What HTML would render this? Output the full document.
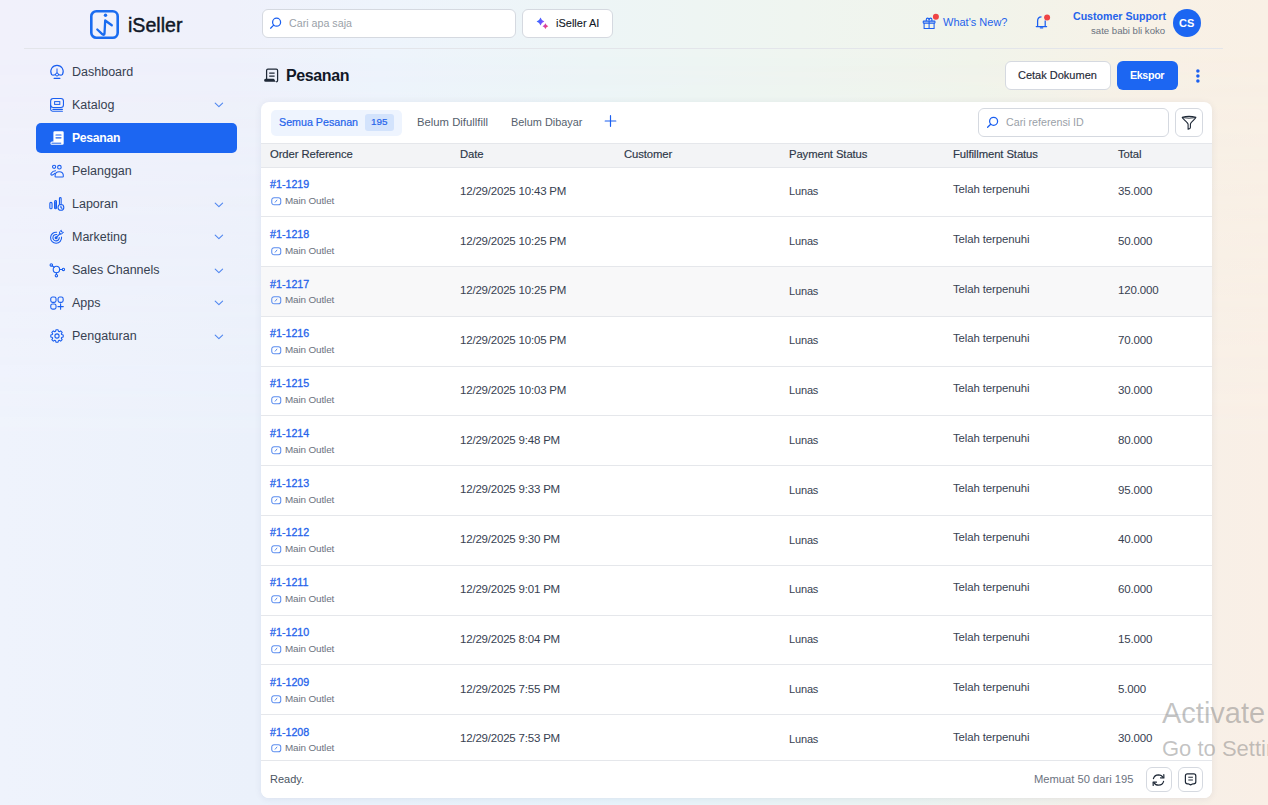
<!DOCTYPE html>
<html><head><meta charset="utf-8"><style>
*{box-sizing:border-box;margin:0;padding:0}
html,body{width:1268px;height:805px;overflow:hidden}
body{font-family:"Liberation Sans",sans-serif;position:relative;
 background:linear-gradient(90deg,#f1f1fb 0%,#eff1fb 18%,#eef4fc 30%,#edf5f6 47%,#eff5f0 63%,#f1f4eb 77%,#f8f1e6 92%,#f9f0e5 100%);color:#1f2937}
.abs{position:absolute}
svg.abs{overflow:visible}
.t{position:absolute;white-space:nowrap;line-height:1}
.box{position:absolute;background:#fff;border:1px solid #d5d9e0;border-radius:6px}
.nav{font-size:12.5px;color:#374151}
.card{left:261px;top:102px;width:951px;height:696px;background:#fff;border-radius:8px;box-shadow:0 1px 7px rgba(30,40,90,.08);overflow:hidden}
.th{position:absolute;left:0;top:41px;width:951px;height:25px;background:#f3f4f6;border-top:1px solid #e5e7eb;border-bottom:1px solid #e5e7eb}
.th .t{font-size:11.3px;letter-spacing:-0.1px;color:#2d3748;top:5px;-webkit-text-stroke:0.15px #2d3748}
.row{position:absolute;left:0;width:951px;height:50px;border-bottom:1px solid #e5e7eb}
.row .ref{font-size:10.7px;color:#2563eb;left:9px;top:11.7px;-webkit-text-stroke:0.3px #2563eb}
.row .mo{font-size:9.9px;letter-spacing:-0.12px;color:#6b7280;left:24px;top:28.5px}
.row .d{font-size:11.5px;letter-spacing:-0.2px;color:#374151;left:199px;top:18.4px}
.row .p{font-size:11px;letter-spacing:-0.15px;color:#374151;left:528px;top:18.8px}
.row .f{font-size:11.4px;letter-spacing:-0.1px;color:#374151;left:692px;top:16.7px}
.row .tot{font-size:11.5px;letter-spacing:-0.15px;color:#374151;left:857px;top:18.5px}
</style></head><body>
<div class="abs" style="left:0;top:0;width:1268px;height:805px;background:linear-gradient(90deg,#eff3fc 0%,#ebf1fb 20%,#e8f4fb 50%,#ecf4f2 72%,#f6f0e8 90%,#f9efe6 100%);-webkit-mask-image:linear-gradient(180deg,transparent 6%,#000 55%)"></div>
<div class="abs" style="left:24px;top:48px;width:1199px;height:1px;background:#e3e5ea"></div>
<svg class="abs" style="left:89px;top:9px;" width="31" height="31" viewBox="0 0 31 31" fill="none"><rect x="2.3" y="2.3" width="26.4" height="26.4" rx="5" stroke="#1a6cf0" stroke-width="2.6"/><circle cx="16.5" cy="6.2" r="1.7" fill="#1a6cf0"/><path d="M8.3,20.5 L13.5,25.3 Q15.2,26.6 15.5,24.5 L16.2,11.5 L22.8,16.3" stroke="#1a6cf0" stroke-width="2.3" stroke-linecap="round" stroke-linejoin="round"/></svg>
<div class="t" style="left:128px;top:16px;font-size:19.6px;color:#111827;-webkit-text-stroke:0.45px #111827">iSeller</div>
<div class="box" style="left:262px;top:9px;width:254px;height:29px"></div>
<svg class="abs" style="left:268px;top:16px;" width="14" height="14" viewBox="0 0 14 14" fill="none"><circle cx="8.6" cy="6.2" r="4" stroke="#1a5ff0" stroke-width="1.25"/><path d="M5.7,9.1 L2.6,12.2" stroke="#1a5ff0" stroke-width="1.25" stroke-linecap="round"/></svg>
<div class="t" style="left:289px;top:18px;font-size:10.7px;color:#9a9fa8">Cari apa saja</div>
<div class="box" style="left:522px;top:9px;width:91px;height:29px"></div>
<svg class="abs" style="left:534px;top:15px;" width="14" height="14" viewBox="0 0 14 14" fill="none"><defs><linearGradient id="sg1" x1="0" y1="0.3" x2="1" y2="0.7"><stop offset="0" stop-color="#1f6bff"/><stop offset="1" stop-color="#9a4dff"/></linearGradient><linearGradient id="sg2" x1="0" y1="0.3" x2="1" y2="0.7"><stop offset="0" stop-color="#b548e0"/><stop offset="1" stop-color="#ff3d55"/></linearGradient></defs><path d="M6.5,2.6 Q7.4,5.6 10.4,6.5 Q7.4,7.4 6.5,10.4 Q5.6,7.4 2.6,6.5 Q5.6,5.6 6.5,2.6Z" fill="url(#sg1)"/><path d="M11.4,8.3 Q12.1,10.5 14.3,11.2 Q12.1,11.9 11.4,14.1 Q10.7,11.9 8.5,11.2 Q10.7,10.5 11.4,8.3Z" fill="url(#sg2)"/></svg>
<div class="t" style="left:556px;top:18px;font-size:11px;color:#111827;-webkit-text-stroke:0.1px #111827">iSeller AI</div>
<svg class="abs" style="left:922px;top:15px;" width="16" height="16" viewBox="0 0 16 16" fill="none"><rect x="1.2" y="6.1" width="11.8" height="2" rx=".6" stroke="#1a5ff0" stroke-width="1.05"/><path d="M2.1,8.1 V13.4 H12.1 V8.1 M7.1,6.1 V13.4" stroke="#1a5ff0" stroke-width="1.05"/><path d="M4.3,6 V4.6 Q4.3,3.1 5.6,3.1 Q7,3.1 7.1,5.5 Q7.2,3.1 8.6,3.1 Q9.9,3.1 9.9,4.6 V6" stroke="#1a5ff0" stroke-width="1.1"/><circle cx="13.9" cy="1.8" r="3" fill="#ef4444"/></svg>
<div class="t" style="left:943px;top:17px;font-size:11px;color:#2563eb">What's New?</div>
<svg class="abs" style="left:1035px;top:15px;" width="14" height="14" viewBox="0 0 14 14" fill="none"><path d="M2.6,11.5 V6 Q2.6,2 6.5,1.9 M10.2,5.5 V11.5" stroke="#1a5ff0" stroke-width="1.25"/><path d="M1.3,11.6 H11.6" stroke="#1a5ff0" stroke-width="1.3" stroke-linecap="round"/><path d="M5.3,12.8 H7.8" stroke="#1a5ff0" stroke-width="1.2" stroke-linecap="round"/><circle cx="12.1" cy="2.6" r="3" fill="#ef4444"/></svg>
<div class="t" style="left:1073px;top:11px;font-size:10.6px;font-weight:700;color:#2563eb">Customer Support</div>
<div class="t" style="left:1091px;top:26px;font-size:9.6px;color:#6b7280">sate babi bli koko</div>
<div class="abs" style="left:1173px;top:9px;width:28px;height:28px;border-radius:50%;background:#1c66f2"></div>
<div class="t" style="left:1179px;top:18px;font-size:11px;font-weight:700;color:#fff">CS</div>
<div class="abs" style="left:36px;top:123px;width:201px;height:30px;background:#1c66f2;border-radius:5px"></div>
<svg class="abs" style="left:50px;top:65px;" width="14" height="14" viewBox="0 0 14 14" fill="none"><path d="M1.5,9.4 A6.2,6.2 0 1 1 12.5,9.4" stroke="#1a5ff0" stroke-width="1.1" stroke-linecap="round" stroke-linejoin="round"/><path d="M7,3.9 V8" stroke="#1a5ff0" stroke-width="1" stroke-linecap="round"/><path d="M1.5,9.4 Q2.4,10.4 4,10 L5.6,9.6 M12.5,9.4 Q11.6,10.4 10,10 L8.4,9.6" stroke="#1a5ff0" stroke-width="1.1" stroke-linecap="round" stroke-linejoin="round"/><circle cx="7" cy="9.5" r="1.5" stroke="#1a5ff0" stroke-width="1"/><path d="M4.1,13.4 H9.9" stroke="#1a5ff0" stroke-width="1.1" stroke-linecap="round" stroke-linejoin="round"/></svg>
<div class="t nav" style="left:72px;top:66.0px">Dashboard</div>
<svg class="abs" style="left:50px;top:98px;" width="14" height="14" viewBox="0 0 14 14" fill="none"><rect x="0.65" y="0.55" width="12.8" height="8.9" rx="2.5" stroke="#1a5ff0" stroke-width="1.1" stroke-linecap="round" stroke-linejoin="round"/><rect x="4.6" y="3.6" width="5.2" height="2.8" stroke="#1a5ff0" stroke-width="1"/><path d="M0.65,7 V11.3 Q0.65,13.2 2.6,13.2 H12.4 M2.9,11.4 H12.4" stroke="#1a5ff0" stroke-width="1.1" stroke-linecap="round" stroke-linejoin="round"/></svg>
<div class="t nav" style="left:72px;top:99.0px">Katalog</div>
<svg class="abs" style="left:214px;top:102px;" width="10" height="6" viewBox="0 0 10 6" fill="none"><path d="M1.2,1.2 L4.9,4.6 L8.6,1.2" stroke="#4f86f0" stroke-width="1.1" stroke-linecap="round" stroke-linejoin="round"/></svg>
<svg class="abs" style="left:50px;top:131px;" width="14" height="14" viewBox="0 0 14 14" fill="none"><path d="M3.4,10.2 V1.6 Q3.4,0.3 4.7,0.3 H12.4 Q13.7,0.3 13.7,1.6 V12.4 Q13.7,13.8 12.3,13.8 H2 Q0.4,13.8 0.4,12.2 Q0.4,10.6 2,10.6 H3.4Z" fill="#fff"/><path d="M6,4 H11 M6,6.8 H11" stroke="#1d63ed" stroke-width="1.2" stroke-linecap="round"/><path d="M1.9,12.2 H10.8" stroke="#1d63ed" stroke-width="1" stroke-linecap="round"/></svg>
<div class="t nav" style="left:72px;top:132.3px;color:#fff;font-weight:700;font-size:12.2px;letter-spacing:-0.3px">Pesanan</div>
<svg class="abs" style="left:50px;top:164px;" width="14" height="14" viewBox="0 0 14 14" fill="none"><circle cx="4.1" cy="2.8" r="1.6" stroke="#1a5ff0" stroke-width="1.1" stroke-linecap="round" stroke-linejoin="round"/><circle cx="9.4" cy="3.2" r="1.8" stroke="#1a5ff0" stroke-width="1.1" stroke-linecap="round" stroke-linejoin="round"/><path d="M5.05,12.2 Q4.9,7.75 9.2,7.75 Q13.5,7.75 13.35,12.2 Q13.3,12.95 12.6,12.95 H5.8 Q5.05,12.95 5.05,12.2Z" stroke="#1a5ff0" stroke-width="1.1" stroke-linecap="round" stroke-linejoin="round"/><path d="M5.5,6.75 Q2.8,6.8 1.2,9.2 Q0.4,10.7 1.6,11.1 Q2.6,11.3 4.8,9.4" stroke="#1a5ff0" stroke-width="1.1" stroke-linecap="round" stroke-linejoin="round"/></svg>
<div class="t nav" style="left:72px;top:165.0px">Pelanggan</div>
<svg class="abs" style="left:50px;top:197px;" width="14" height="14" viewBox="0 0 14 14" fill="none"><rect x="-0.15" y="5.35" width="2.2" height="6.4" rx="1.1" stroke="#1a5ff0" stroke-width="1.1" stroke-linecap="round" stroke-linejoin="round"/><rect x="4.75" y="3.45" width="1.7" height="8.3" rx="0.85" stroke="#1a5ff0" stroke-width="1.1" stroke-linecap="round" stroke-linejoin="round"/><path d="M4.9,4.5 V11.5" stroke="#1a5ff0" stroke-width="1.6"/><path d="M9.45,7.2 V1.5 Q9.45,0.65 10.3,0.65 Q11.15,0.65 11.15,1.5 V6.6" stroke="#1a5ff0" stroke-width="1.1" stroke-linecap="round" stroke-linejoin="round"/><circle cx="10.9" cy="10.4" r="2.9" stroke="#1a5ff0" stroke-width="1.1" stroke-linecap="round" stroke-linejoin="round"/><path d="M10.9,9 V10.5 L11.9,11.3" stroke="#1a5ff0" stroke-width="1.1" stroke-linecap="round" stroke-linejoin="round"/></svg>
<div class="t nav" style="left:72px;top:198.0px">Laporan</div>
<svg class="abs" style="left:214px;top:202px;" width="10" height="6" viewBox="0 0 10 6" fill="none"><path d="M1.2,1.2 L4.9,4.6 L8.6,1.2" stroke="#4f86f0" stroke-width="1.1" stroke-linecap="round" stroke-linejoin="round"/></svg>
<svg class="abs" style="left:50px;top:230px;" width="14" height="14" viewBox="0 0 14 14" fill="none"><path d="M11.55,7.1 A5.5,5.5 0 1 1 6.7,2.23" stroke="#1a5ff0" stroke-width="1.1" stroke-linecap="round" stroke-linejoin="round"/><path d="M9.3,7.6 A3.2,3.2 0 1 1 6.8,4.58" stroke="#1a5ff0" stroke-width="1.1" stroke-linecap="round" stroke-linejoin="round"/><circle cx="6.1" cy="7.7" r="1.5" fill="#1a5ff0"/><path d="M6.1,7.7 L10.3,3.5" stroke="#1a5ff0" stroke-width="1.1" stroke-linecap="round" stroke-linejoin="round"/><path d="M9.3,3.3 L9.9,1.4 L11.3,0.3 L11.6,2 L13.4,2.3 L12.3,3.6 L10.4,4.3Z" stroke="#1a5ff0" stroke-width="1" stroke-linejoin="round" fill="none"/></svg>
<div class="t nav" style="left:72px;top:231.0px">Marketing</div>
<svg class="abs" style="left:214px;top:234px;" width="10" height="6" viewBox="0 0 10 6" fill="none"><path d="M1.2,1.2 L4.9,4.6 L8.6,1.2" stroke="#4f86f0" stroke-width="1.1" stroke-linecap="round" stroke-linejoin="round"/></svg>
<svg class="abs" style="left:50px;top:263px;" width="14" height="14" viewBox="0 0 14 14" fill="none"><circle cx="6.4" cy="6.5" r="3.2" stroke="#1a5ff0" stroke-width="1.1" stroke-linecap="round" stroke-linejoin="round"/><circle cx="1.3" cy="1.9" r="1.2" stroke="#1a5ff0" stroke-width="1.1" stroke-linecap="round" stroke-linejoin="round"/><circle cx="13.4" cy="6.4" r="1.2" stroke="#1a5ff0" stroke-width="1.1" stroke-linecap="round" stroke-linejoin="round"/><circle cx="6.4" cy="12.7" r="1.2" stroke="#1a5ff0" stroke-width="1.1" stroke-linecap="round" stroke-linejoin="round"/><path d="M2.2,2.8 L4.1,4.3 M9.6,6.45 H12.2 M6.4,9.7 V11.5" stroke="#1a5ff0" stroke-width="1.1" stroke-linecap="round" stroke-linejoin="round"/></svg>
<div class="t nav" style="left:72px;top:264.0px">Sales Channels</div>
<svg class="abs" style="left:214px;top:268px;" width="10" height="6" viewBox="0 0 10 6" fill="none"><path d="M1.2,1.2 L4.9,4.6 L8.6,1.2" stroke="#4f86f0" stroke-width="1.1" stroke-linecap="round" stroke-linejoin="round"/></svg>
<svg class="abs" style="left:50px;top:296px;" width="14" height="14" viewBox="0 0 14 14" fill="none"><rect x="0.75" y="1.05" width="5.3" height="5.3" rx="1.8" stroke="#1a5ff0" stroke-width="1.1" stroke-linecap="round" stroke-linejoin="round"/><rect x="8.05" y="1.05" width="5.1" height="5.3" rx="1.8" stroke="#1a5ff0" stroke-width="1.1" stroke-linecap="round" stroke-linejoin="round"/><rect x="0.75" y="8.05" width="5.3" height="5.1" rx="1.8" stroke="#1a5ff0" stroke-width="1.1" stroke-linecap="round" stroke-linejoin="round"/><path d="M10.6,7.9 V13.3 M7.9,10.6 H13.3" stroke="#1a5ff0" stroke-width="1.1" stroke-linecap="round" stroke-linejoin="round"/></svg>
<div class="t nav" style="left:72px;top:297.0px">Apps</div>
<svg class="abs" style="left:214px;top:300px;" width="10" height="6" viewBox="0 0 10 6" fill="none"><path d="M1.2,1.2 L4.9,4.6 L8.6,1.2" stroke="#4f86f0" stroke-width="1.1" stroke-linecap="round" stroke-linejoin="round"/></svg>
<svg class="abs" style="left:50px;top:329px;" width="14" height="14" viewBox="0 0 14 14" fill="none"><path d="M11.68,5.55 L13.21,5.93 L13.21,8.07 L11.68,8.45 L11.33,9.29 L12.14,10.64 L10.64,12.14 L9.29,11.33 L8.45,11.68 L8.07,13.21 L5.93,13.21 L5.55,11.68 L4.71,11.33 L3.36,12.14 L1.86,10.64 L2.67,9.29 L2.32,8.45 L0.79,8.07 L0.79,5.93 L2.32,5.55 L2.67,4.71 L1.86,3.36 L3.36,1.86 L4.71,2.67 L5.55,2.32 L5.93,0.79 L8.07,0.79 L8.45,2.32 L9.29,2.67 L10.64,1.86 L12.14,3.36 L11.33,4.71Z" stroke="#1a5ff0" stroke-width="1.1" stroke-linecap="round" stroke-linejoin="round"/><circle cx="7" cy="7" r="2.1" stroke="#1a5ff0" stroke-width="1.1" stroke-linecap="round" stroke-linejoin="round"/></svg>
<div class="t nav" style="left:72px;top:330.0px">Pengaturan</div>
<svg class="abs" style="left:214px;top:334px;" width="10" height="6" viewBox="0 0 10 6" fill="none"><path d="M1.2,1.2 L4.9,4.6 L8.6,1.2" stroke="#4f86f0" stroke-width="1.1" stroke-linecap="round" stroke-linejoin="round"/></svg>
<svg class="abs" style="left:263px;top:68.4px;" width="16" height="16" viewBox="0 0 16 16" fill="none"><path d="M3.6,11 V2.4 Q3.6,1.1 4.9,1.1 H13.3 Q14.6,1.1 14.6,2.4 V12.4 Q14.6,13.8 13.1,13.8" stroke="#1f2937" stroke-width="1.25" stroke-linejoin="round"/><path d="M1.1,12.3 Q1.1,10.8 2.6,10.8 H10.4 Q11.2,10.8 11.6,11.8 Q12.1,13.8 13.3,13.8 H2.6 Q1.1,13.8 1.1,12.3Z" fill="#1f2937"/><path d="M6.2,5.2 H11.6 M6.2,8.1 H11.6" stroke="#1f2937" stroke-width="1.2"/></svg>
<div class="t" style="left:286px;top:68px;font-size:16px;font-weight:700;color:#111827;letter-spacing:-0.4px">Pesanan</div>
<div class="box" style="left:1005px;top:61px;width:106px;height:29px"></div>
<div class="t" style="left:1018px;top:70.2px;font-size:11px;color:#1f2937;-webkit-text-stroke:0.15px #1f2937">Cetak Dokumen</div>
<div class="abs" style="left:1117px;top:61px;width:61px;height:29px;background:#1c66f2;border-radius:6px"></div>
<div class="t" style="left:1130px;top:70.3px;font-size:10.7px;font-weight:700;color:#fff;letter-spacing:-0.35px">Ekspor</div>
<svg class="abs" style="left:1194px;top:67px;" width="8" height="18" viewBox="0 0 8 18" fill="none"><circle cx="3.9" cy="4" r="1.75" fill="#1a5ff0"/><circle cx="3.9" cy="9" r="1.75" fill="#1a5ff0"/><circle cx="3.9" cy="14.1" r="1.75" fill="#1a5ff0"/></svg>
<div class="abs card"><div class="abs" style="left:10px;top:8px;width:131px;height:26px;background:#eef4fe;border-radius:5px"></div>
<div class="t" style="left:18px;top:15px;font-size:10.7px;color:#2563eb;-webkit-text-stroke:0.2px #2563eb">Semua Pesanan</div>
<div class="abs" style="left:104px;top:12px;width:29px;height:17px;background:#d3e3fc;border-radius:3px"></div>
<div class="t" style="left:110px;top:15.4px;font-size:9.9px;color:#2563eb;-webkit-text-stroke:0.2px #2563eb">195</div>
<div class="t" style="left:156px;top:15px;font-size:11.3px;color:#565f6d">Belum Difullfill</div>
<div class="t" style="left:250px;top:15px;font-size:10.9px;color:#565f6d">Belum Dibayar</div>
<svg class="abs" style="left:342px;top:12px;" width="14" height="14" viewBox="0 0 14 14" fill="none"><path d="M7.5,1.7 V12.3 M2.2,7 H12.8" stroke="#1a5ff0" stroke-width="1.2" stroke-linecap="round"/></svg>
<div class="box" style="left:717px;top:6px;width:191px;height:29px"></div>
<svg class="abs" style="left:724px;top:13px;" width="14" height="14" viewBox="0 0 14 14" fill="none"><circle cx="8.6" cy="6.3" r="4" stroke="#1a5ff0" stroke-width="1.25"/><path d="M5.7,9.2 L2.6,12.3" stroke="#1a5ff0" stroke-width="1.25" stroke-linecap="round"/></svg>
<div class="t" style="left:745px;top:15px;font-size:10.7px;color:#9a9fa8">Cari referensi ID</div>
<div class="box" style="left:914px;top:6px;width:28px;height:29px"></div>
<svg class="abs" style="left:919px;top:12px;" width="18" height="18" viewBox="0 0 18 18" fill="none"><path d="M2.2,3.2 Q9,1.5 15.9,3.2 Q15.6,4.6 11.6,8.2 Q10.4,9.3 10.4,10.6 V13.4 Q10.4,14.7 8.1,15.3 V10.6 Q8.1,9.3 6.7,8.2 Q2.5,4.6 2.2,3.2Z" stroke="#1f2937" stroke-width="1.1" stroke-linejoin="round"/><path d="M2.6,3.6 Q9,4.8 15.5,3.6" stroke="#1f2937" stroke-width="0.9"/></svg>
<div class="th">
<div class="t" style="left:9px">Order Reference</div>
<div class="t" style="left:199px">Date</div>
<div class="t" style="left:363px">Customer</div>
<div class="t" style="left:528px">Payment Status</div>
<div class="t" style="left:692px">Fulfillment Status</div>
<div class="t" style="left:857px">Total</div>
</div>
<div class="row" style="top:65.35px;"><div class="t ref">#1-1219</div><svg class="abs" style="left:10px;top:29.5px;" width="11" height="9" viewBox="0 0 11 9" fill="none"><rect x="0.75" y="0.75" width="9" height="7" rx="2.3" stroke="#5b8def" stroke-width="1.05"/><path d="M5.9,3.1 L4.2,5.2" stroke="#5b8def" stroke-width="1" stroke-linecap="round"/></svg><div class="t mo">Main Outlet</div><div class="t d">12/29/2025 10:43 PM</div><div class="t p">Lunas</div><div class="t f">Telah terpenuhi</div><div class="t tot">35.000</div></div>
<div class="row" style="top:115.13px;"><div class="t ref">#1-1218</div><svg class="abs" style="left:10px;top:29.5px;" width="11" height="9" viewBox="0 0 11 9" fill="none"><rect x="0.75" y="0.75" width="9" height="7" rx="2.3" stroke="#5b8def" stroke-width="1.05"/><path d="M5.9,3.1 L4.2,5.2" stroke="#5b8def" stroke-width="1" stroke-linecap="round"/></svg><div class="t mo">Main Outlet</div><div class="t d">12/29/2025 10:25 PM</div><div class="t p">Lunas</div><div class="t f">Telah terpenuhi</div><div class="t tot">50.000</div></div>
<div class="row" style="top:164.91px;background:#f8f8f9;"><div class="t ref">#1-1217</div><svg class="abs" style="left:10px;top:29.5px;" width="11" height="9" viewBox="0 0 11 9" fill="none"><rect x="0.75" y="0.75" width="9" height="7" rx="2.3" stroke="#5b8def" stroke-width="1.05"/><path d="M5.9,3.1 L4.2,5.2" stroke="#5b8def" stroke-width="1" stroke-linecap="round"/></svg><div class="t mo">Main Outlet</div><div class="t d">12/29/2025 10:25 PM</div><div class="t p">Lunas</div><div class="t f">Telah terpenuhi</div><div class="t tot">120.000</div></div>
<div class="row" style="top:214.69px;"><div class="t ref">#1-1216</div><svg class="abs" style="left:10px;top:29.5px;" width="11" height="9" viewBox="0 0 11 9" fill="none"><rect x="0.75" y="0.75" width="9" height="7" rx="2.3" stroke="#5b8def" stroke-width="1.05"/><path d="M5.9,3.1 L4.2,5.2" stroke="#5b8def" stroke-width="1" stroke-linecap="round"/></svg><div class="t mo">Main Outlet</div><div class="t d">12/29/2025 10:05 PM</div><div class="t p">Lunas</div><div class="t f">Telah terpenuhi</div><div class="t tot">70.000</div></div>
<div class="row" style="top:264.47px;"><div class="t ref">#1-1215</div><svg class="abs" style="left:10px;top:29.5px;" width="11" height="9" viewBox="0 0 11 9" fill="none"><rect x="0.75" y="0.75" width="9" height="7" rx="2.3" stroke="#5b8def" stroke-width="1.05"/><path d="M5.9,3.1 L4.2,5.2" stroke="#5b8def" stroke-width="1" stroke-linecap="round"/></svg><div class="t mo">Main Outlet</div><div class="t d">12/29/2025 10:03 PM</div><div class="t p">Lunas</div><div class="t f">Telah terpenuhi</div><div class="t tot">30.000</div></div>
<div class="row" style="top:314.25px;"><div class="t ref">#1-1214</div><svg class="abs" style="left:10px;top:29.5px;" width="11" height="9" viewBox="0 0 11 9" fill="none"><rect x="0.75" y="0.75" width="9" height="7" rx="2.3" stroke="#5b8def" stroke-width="1.05"/><path d="M5.9,3.1 L4.2,5.2" stroke="#5b8def" stroke-width="1" stroke-linecap="round"/></svg><div class="t mo">Main Outlet</div><div class="t d">12/29/2025 9:48 PM</div><div class="t p">Lunas</div><div class="t f">Telah terpenuhi</div><div class="t tot">80.000</div></div>
<div class="row" style="top:364.03px;"><div class="t ref">#1-1213</div><svg class="abs" style="left:10px;top:29.5px;" width="11" height="9" viewBox="0 0 11 9" fill="none"><rect x="0.75" y="0.75" width="9" height="7" rx="2.3" stroke="#5b8def" stroke-width="1.05"/><path d="M5.9,3.1 L4.2,5.2" stroke="#5b8def" stroke-width="1" stroke-linecap="round"/></svg><div class="t mo">Main Outlet</div><div class="t d">12/29/2025 9:33 PM</div><div class="t p">Lunas</div><div class="t f">Telah terpenuhi</div><div class="t tot">95.000</div></div>
<div class="row" style="top:413.81px;"><div class="t ref">#1-1212</div><svg class="abs" style="left:10px;top:29.5px;" width="11" height="9" viewBox="0 0 11 9" fill="none"><rect x="0.75" y="0.75" width="9" height="7" rx="2.3" stroke="#5b8def" stroke-width="1.05"/><path d="M5.9,3.1 L4.2,5.2" stroke="#5b8def" stroke-width="1" stroke-linecap="round"/></svg><div class="t mo">Main Outlet</div><div class="t d">12/29/2025 9:30 PM</div><div class="t p">Lunas</div><div class="t f">Telah terpenuhi</div><div class="t tot">40.000</div></div>
<div class="row" style="top:463.59px;"><div class="t ref">#1-1211</div><svg class="abs" style="left:10px;top:29.5px;" width="11" height="9" viewBox="0 0 11 9" fill="none"><rect x="0.75" y="0.75" width="9" height="7" rx="2.3" stroke="#5b8def" stroke-width="1.05"/><path d="M5.9,3.1 L4.2,5.2" stroke="#5b8def" stroke-width="1" stroke-linecap="round"/></svg><div class="t mo">Main Outlet</div><div class="t d">12/29/2025 9:01 PM</div><div class="t p">Lunas</div><div class="t f">Telah terpenuhi</div><div class="t tot">60.000</div></div>
<div class="row" style="top:513.37px;"><div class="t ref">#1-1210</div><svg class="abs" style="left:10px;top:29.5px;" width="11" height="9" viewBox="0 0 11 9" fill="none"><rect x="0.75" y="0.75" width="9" height="7" rx="2.3" stroke="#5b8def" stroke-width="1.05"/><path d="M5.9,3.1 L4.2,5.2" stroke="#5b8def" stroke-width="1" stroke-linecap="round"/></svg><div class="t mo">Main Outlet</div><div class="t d">12/29/2025 8:04 PM</div><div class="t p">Lunas</div><div class="t f">Telah terpenuhi</div><div class="t tot">15.000</div></div>
<div class="row" style="top:563.15px;"><div class="t ref">#1-1209</div><svg class="abs" style="left:10px;top:29.5px;" width="11" height="9" viewBox="0 0 11 9" fill="none"><rect x="0.75" y="0.75" width="9" height="7" rx="2.3" stroke="#5b8def" stroke-width="1.05"/><path d="M5.9,3.1 L4.2,5.2" stroke="#5b8def" stroke-width="1" stroke-linecap="round"/></svg><div class="t mo">Main Outlet</div><div class="t d">12/29/2025 7:55 PM</div><div class="t p">Lunas</div><div class="t f">Telah terpenuhi</div><div class="t tot">5.000</div></div>
<div class="row" style="top:612.93px;"><div class="t ref">#1-1208</div><svg class="abs" style="left:10px;top:29.5px;" width="11" height="9" viewBox="0 0 11 9" fill="none"><rect x="0.75" y="0.75" width="9" height="7" rx="2.3" stroke="#5b8def" stroke-width="1.05"/><path d="M5.9,3.1 L4.2,5.2" stroke="#5b8def" stroke-width="1" stroke-linecap="round"/></svg><div class="t mo">Main Outlet</div><div class="t d">12/29/2025 7:53 PM</div><div class="t p">Lunas</div><div class="t f">Telah terpenuhi</div><div class="t tot">30.000</div></div>
<div class="abs" style="left:0;top:658px;width:951px;height:38px;background:#fff;border-top:1px solid #e5e7eb"></div>
<div class="t" style="left:9px;top:672px;font-size:11px;color:#4b5563">Ready.</div>
<div class="t" style="left:773px;top:672px;font-size:11.2px;color:#6b7280">Memuat 50 dari 195</div>
<div class="box" style="left:885px;top:665px;width:26px;height:25px"></div>
<svg class="abs" style="left:890px;top:670px;" width="16" height="16" viewBox="0 0 16 16" fill="none"><path d="M2.4,6.6 Q3.4,2.9 7.4,2.8 Q10.6,2.8 12.1,5.4" stroke="#1f2937" stroke-width="1.2" stroke-linecap="round"/><path d="M12.8,2.6 L12.9,6 L9.5,5.8" stroke="#1f2937" stroke-width="1.2" stroke-linecap="round" stroke-linejoin="round"/><path d="M12.6,9.4 Q11.6,13.1 7.6,13.2 Q4.4,13.2 2.9,10.6" stroke="#1f2937" stroke-width="1.2" stroke-linecap="round"/><path d="M2.2,13.4 L2.1,10 L5.5,10.2" stroke="#1f2937" stroke-width="1.2" stroke-linecap="round" stroke-linejoin="round"/></svg>
<div class="box" style="left:917px;top:665px;width:25px;height:25px"></div>
<svg class="abs" style="left:922px;top:670px;" width="16" height="16" viewBox="0 0 16 16" fill="none"><path d="M5.1,11.8 H4.4 Q2.4,11.8 2.4,9.8 V3.9 Q2.4,1.9 4.4,1.9 H10.8 Q12.8,1.9 12.8,3.9 V9.8 Q12.8,11.8 10.8,11.8 H10.1 L7.6,12.9 Z" stroke="#1f2937" stroke-width="1.2" stroke-linejoin="round"/><path d="M5.3,5.3 H9.9 M5.3,7.9 H9.9" stroke="#1f2937" stroke-width="1.05"/></svg></div>
<div class="t" style="left:1162px;top:699px;font-size:29px;color:rgba(120,120,120,.44);font-family:'Liberation Sans',sans-serif">Activate Windows</div>
<div class="t" style="left:1162px;top:737.5px;font-size:22px;color:rgba(120,120,120,.44)">Go to Settings to activate Windows.</div>
</body></html>
